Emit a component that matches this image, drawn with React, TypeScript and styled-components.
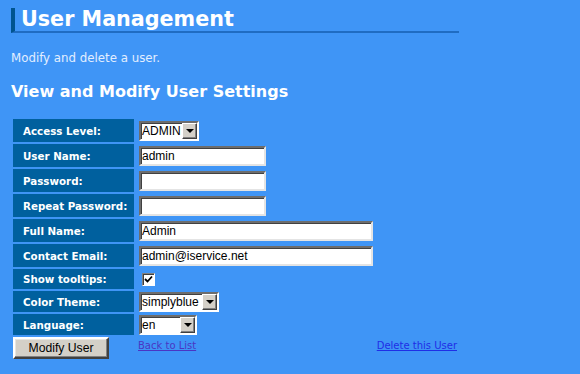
import React, { FC } from 'react';
import styled, { createGlobalStyle } from 'styled-components';

const GlobalStyle = createGlobalStyle`
    html, body {
        margin: 0;
        padding: 0;
        background: #3f95f6;
    }
    body {
        font-family: "DejaVu Sans", Verdana, sans-serif;
    }
`;

const Page = styled.div`
    width: 580px;
    height: 374px;
    padding: 8px 0 0 11px;
    box-sizing: border-box;
    background: #3f95f6;
    overflow: hidden;
`;

const Header = styled.h1`
    width: 438px;
    height: 23px;
    margin: 0;
    padding-left: 6px;
    box-sizing: content-box;
    border-left: 4px solid #00548f;
    border-bottom: 2px solid #1f6cc2;
    color: #ffffff;
    font-size: 20.7px;
    line-height: 23px;
    font-weight: bold;
    white-space: nowrap;
`;

const Intro = styled.p`
    margin: 18px 0 0;
    color: #e2eeff;
    font-size: 11.8px;
    line-height: 14px;
`;

const SectionTitle = styled.h2`
    margin: 17px 0 0;
    color: #ffffff;
    font-size: 16px;
    line-height: 20px;
    font-weight: bold;
`;

const FormGrid = styled.div`
    display: grid;
    grid-template-columns: 121px 323px;
    gap: 2px;
    margin: 17px 0 0 2px;
`;

const Label = styled.div<{ $h: number }>`
    height: ${ p => p.$h }px;
    display: flex;
    align-items: center;
    padding-left: 10px;
    background: #00609e;
    color: #ffffff;
    font-size: 10.3px;
    font-weight: bold;
    white-space: nowrap;
`;

const Field = styled.div`
    display: flex;
    align-items: center;
    padding-left: 3px;
`;

const TextInput = styled.input<{ $w: number }>`
    width: ${ p => p.$w }px;
    height: 20px;
    box-sizing: border-box;
    margin: 0;
    padding: 1px 1px;
    border: 2px solid;
    border-color: #6d6d6d #e4e4e4 #e4e4e4 #6d6d6d;
    box-shadow: inset 1px 1px 0 #404040;
    background: #ffffff;
    font-family: "Liberation Sans", Arial, sans-serif;
    font-size: 12px;
    color: #000000;
    outline: none;
`;

const SelectBox = styled.div<{ $w: number }>`
    width: ${ p => p.$w }px;
    height: 20px;
    box-sizing: border-box;
    display: flex;
    align-items: center;
    border: 2px solid;
    border-color: #6d6d6d #ffffff #ffffff #6d6d6d;
    box-shadow: inset 1px 1px 0 #404040;
    background: #ffffff;
`;

const SelectNative = styled.select`
    flex: 1;
    min-width: 0;
    height: 100%;
    margin: 0;
    padding: 0 0 0 1px;
    border: none;
    appearance: none;
    background: transparent;
    font-family: "Liberation Sans", Arial, sans-serif;
    font-size: 12px;
    color: #000000;
    outline: none;
`;

const DropArrow = styled.span`
    width: 15px;
    height: 16px;
    box-sizing: border-box;
    display: flex;
    align-items: center;
    justify-content: center;
    background: #d4d0c8;
    border: 1px solid;
    border-color: #ffffff #404040 #404040 #ffffff;
    box-shadow: inset -1px -1px 0 #808080;

    &::after {
        content: '';
        border-left: 4px solid transparent;
        border-right: 4px solid transparent;
        border-top: 4px solid #000000;
    }
`;

const CheckBox = styled.span`
    width: 13px;
    height: 13px;
    box-sizing: border-box;
    margin-left: 3px;
    display: flex;
    align-items: center;
    justify-content: center;
    border: 1px solid;
    border-color: #808080 #ffffff #ffffff #808080;
    box-shadow: inset 1px 1px 0 #404040;
    background: #ffffff;
`;

const ActionRow = styled.div`
    display: flex;
    align-items: flex-start;
    width: 446px;
    margin: 2px 0 0 2px;
`;

const Button = styled.button`
    width: 96px;
    height: 22px;
    margin: 0;
    padding: 0;
    background: #d4d0c8;
    border: 2px solid;
    border-color: #ffffff #404040 #404040 #ffffff;
    box-shadow: inset -1px -1px 0 #808080, inset 1px 1px 0 #e8e6e0;
    font-family: "Liberation Sans", Arial, sans-serif;
    font-size: 12.2px;
    color: #000000;
`;

const TextLink = styled.a<{ $colour: string }>`
    margin-top: 2px;
    color: ${ p => p.$colour };
    font-size: 10px;
    line-height: 14px;
    text-decoration: underline;
    cursor: pointer;
`;

const BackLink = styled( TextLink )`
    margin-left: 29px;
`;

const DeleteLink = styled( TextLink )`
    margin-left: auto;
    margin-right: 2px;
`;

const Select: FC<{ w: number, value: string, options: string[] }> = ({ w, value, options }) => (
    <SelectBox $w={ w }>
        <SelectNative defaultValue={ value }>
            { options.map( o => <option key={ o }>{ o }</option> ) }
        </SelectNative>
        <DropArrow />
    </SelectBox>
);

// #################################################################################

const App: FC = () => (
    <Page>
        <GlobalStyle />
        <Header>User Management</Header>
        <Intro>Modify and delete a user.</Intro>
        <SectionTitle>View and Modify User Settings</SectionTitle>
        <FormGrid>
            <Label $h={ 23 }>Access Level:</Label>
            <Field><Select w={ 60 } value='ADMIN' options={ [ 'ADMIN', 'USER' ] } /></Field>

            <Label $h={ 23 }>User Name:</Label>
            <Field><TextInput $w={ 127 } defaultValue='admin' /></Field>

            <Label $h={ 23 }>Password:</Label>
            <Field><TextInput $w={ 127 } type='password' /></Field>

            <Label $h={ 23 }>Repeat Password:</Label>
            <Field><TextInput $w={ 127 } type='password' /></Field>

            <Label $h={ 23 }>Full Name:</Label>
            <Field><TextInput $w={ 234 } defaultValue='Admin' /></Field>

            <Label $h={ 23 }>Contact Email:</Label>
            <Field><TextInput $w={ 234 } defaultValue='admin@iservice.net' /></Field>

            <Label $h={ 20 }>Show tooltips:</Label>
            <Field>
                <CheckBox>
                    <svg width='9' height='9' viewBox='0 0 9 9'>
                        <path d='M1 4 L3.5 6.5 L8 1.5' fill='none' stroke='#000' strokeWidth='1.8' />
                    </svg>
                </CheckBox>
            </Field>

            <Label $h={ 21 }>Color Theme:</Label>
            <Field><Select w={ 80 } value='simplyblue' options={ [ 'simplyblue', 'classic' ] } /></Field>

            <Label $h={ 21 }>Language:</Label>
            <Field><Select w={ 58 } value='en' options={ [ 'en', 'de' ] } /></Field>
        </FormGrid>
        <ActionRow>
            <Button type='button'>Modify User</Button>
            <BackLink $colour='#4a35c4'>Back to List</BackLink>
            <DeleteLink $colour='#1f2ee6'>Delete this User</DeleteLink>
        </ActionRow>
    </Page>
);

export default App;
